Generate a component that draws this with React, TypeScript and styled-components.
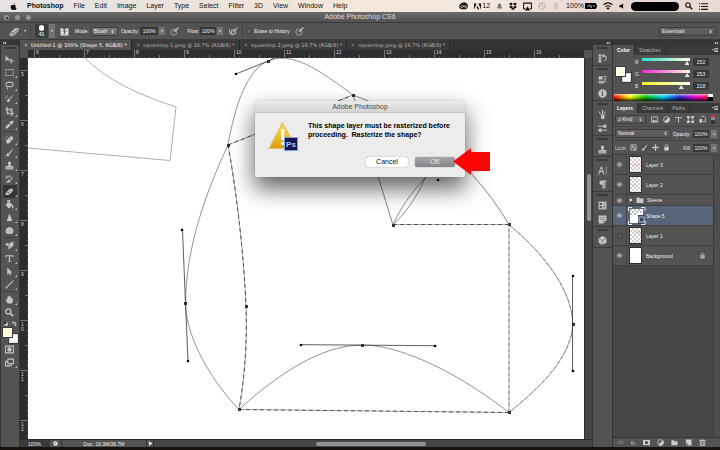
import React from "react";
import styled, { createGlobalStyle, css } from "styled-components";

const Global = createGlobalStyle`
  * { box-sizing: border-box; }
  body { margin: 0; background: #17130f; overflow: hidden; }
  button, input, select { font: inherit; color: inherit; margin: 0; padding: 0; border: 0; background: none; border-radius: 0; outline: none; }
  svg { display: block; flex: none; }
`;

const ui = `"Liberation Sans", Arial, sans-serif`;

const Page = styled.div`
  position: relative;
  display: flex;
  flex-direction: column;
  height: 100vh;
  font: 5px/8px ${ui};
  color: #e4e4e4;
`;

/* ---------- system menu bar ---------- */
const MenuBar = styled.header`
  display: flex;
  align-items: center;
  justify-content: space-between;
  height: 12px;
  padding: 0 12px 0 10px;
  background: linear-gradient(90deg, #e6e3e2, #ece3dd 25%, #f4e8dc 50%, #f5e9e0 65%, #e8d6d0 85%, #e9dad6);
  color: #111;
  font-size: 7px;
  line-height: 12px;
`;
const MenuList = styled.nav`
  display: flex;
  align-items: center;
  gap: 10px;
`;
const MenuItem = styled.button<{ $bold?: boolean }>`
  font-weight: ${(p) => (p.$bold ? 700 : 400)};
`;
const Tray = styled.div`
  display: flex;
  align-items: center;
  gap: 6px;
`;
const TrayGroup = styled.span`
  display: flex;
  align-items: center;
  gap: 1px;
`;
const Redacted = styled.span`
  width: 48px;
  height: 9px;
  border-radius: 5px;
  background: #000;
`;

/* ---------- window chrome ---------- */
const TitleBar = styled.div`
  position: relative;
  display: flex;
  align-items: center;
  justify-content: center;
  height: 11px;
  background: linear-gradient(#6b6b6b, #515151);
  border-bottom: 1px solid #3b3b3b;
  font-size: 7px;
  color: #dcdcdc;
`;
const Lights = styled.div`
  position: absolute;
  left: 4px;
  top: 3px;
  display: flex;
  gap: 6px;
`;
const Light = styled.button`
  display: grid;
  place-items: center;
  width: 5px;
  height: 5px;
  border-radius: 50%;
  background: #97979b;
`;
const Options = styled.div`
  display: flex;
  align-items: center;
  height: 17px;
  padding: 0 4px 0 9px;
  background: #535353;
  border-bottom: 1px solid #3a3a3a;
  gap: 3px;
`;
const Cluster = styled.div<{ $gap?: number; $pad?: number }>`
  display: flex;
  align-items: center;
  gap: ${(p) => p.$gap ?? 2}px;
  padding-left: ${(p) => p.$pad ?? 0}px;
`;
const Spacer = styled.span`
  flex: 1;
`;
const Rule = styled.span`
  width: 1px;
  height: 12px;
  background: #424242;
`;
const BrushPick = styled.button`
  display: flex;
  flex-direction: column;
  align-items: center;
  width: 13px;
  height: 14px;
  padding-top: 1px;
  background: #3b3b3b;
  line-height: 6px;
  font-weight: 700;
`;
const BrushDot = styled.span`
  width: 5px;
  height: 6px;
  border-radius: 3px;
  background: #fff;
`;
const Drop = styled.button<{ $tall?: boolean }>`
  display: grid;
  place-items: center;
  width: 6px;
  height: ${(p) => (p.$tall ? 14 : 8)}px;
  background: #747474;
`;
const PlainLabel = styled.label`
  color: #f0f0f0;
  white-space: nowrap;
`;
const Value = styled.input<{ $w?: number }>`
  width: ${(p) => p.$w ?? 16}px;
  height: 8px;
  background: #383838 !important;
  color: #f4f4f4 !important;
  text-align: center;
`;
const SelectBox = styled.span<{ $w?: number; $dark?: boolean }>`
  display: grid;
  grid-template-columns: 1fr 7px;
  align-items: center;
  ${(p) => (p.$w ? `width: ${p.$w}px;` : "flex: 1;")}
  height: 9px;
  border: 1px solid #3e3e3e;
  border-radius: 1px;
  background: ${(p) => (p.$dark ? "linear-gradient(#626262, #585858)" : "linear-gradient(#7b7b7b, #666)")};
  select {
    grid-area: 1 / 1 / 2 / 3;
    appearance: none;
    width: 100%;
    height: 7px;
    line-height: 7px;
    padding-left: 2px;
    color: #f2f2f2;
  }
  svg {
    grid-area: 1 / 2 / 2 / 3;
    pointer-events: none;
  }
`;
const Check = styled.input`
  appearance: none;
  width: 6px;
  height: 6px;
  border: 1px solid #3c3c3c !important;
  background: #626262 !important;
`;

/* ---------- work area ---------- */
const Work = styled.div`
  display: flex;
  flex: 1;
  min-height: 0;
  margin-bottom: 3px;
  background: #333;
  padding-left: 1px;
  gap: 1px;
`;
const Column = styled.div<{ $w: number }>`
  display: flex;
  flex-direction: column;
  flex: none;
  width: ${(p) => p.$w}px;
  background: #535353;
`;
const Collapse = styled.button<{ $end?: boolean }>`
  display: flex;
  align-items: center;
  justify-content: ${(p) => (p.$end ? "flex-end" : "flex-start")};
  flex: none;
  height: 5px;
  padding: 0 2px;
  background: #363636;
`;
const Grip = styled.span<{ $h: number }>`
  display: block;
  flex: none;
  align-self: center;
  width: 11px;
  height: ${(p) => p.$h}px;
  background: linear-gradient(#3a3a3a, #3a3a3a) center 2px / 11px 2px no-repeat;
`;
const Tool = styled.button<{ $on?: boolean }>`
  display: grid;
  place-items: center;
  flex: none;
  height: 13px;
  margin: 0 2px;
  color: #c6c6c6;
  ${(p) => p.$on && css`background: #343434; border-radius: 1px;`}
`;
const ToolRule = styled.span`
  flex: none;
  height: 1px;
  margin: 0 2px 1px;
  background: #414141;
`;
const Swatches = styled.div`
  position: relative;
  flex: none;
  align-self: center;
  width: 15px;
  height: 15px;
`;
const Swatch = styled.button<{ $back?: boolean }>`
  position: absolute;
  ${(p) => (p.$back ? "right: 0; bottom: 0; background: #fff;" : "left: 0; top: 0; background: #fefbda;")}
  width: 9px;
  height: 9px;
  border: 1px solid ${(p) => (p.$back ? "#ddd" : "#fff")};
  outline: 1px solid #3a3a3a;
`;
const MiniRow = styled.div`
  display: flex;
  justify-content: space-around;
  align-items: center;
  height: 9px;
`;

/* ---------- document ---------- */
const Doc = styled.main`
  display: flex;
  flex-direction: column;
  flex: 1;
  min-width: 0;
`;
const Tabs = styled.div`
  display: flex;
  height: 10px;
  background: #333;
  font: 5px/9px "DejaVu Sans", sans-serif;
`;
const Tab = styled.button<{ $on?: boolean }>`
  display: flex;
  align-items: center;
  gap: 3px;
  padding: 0 4px;
  white-space: nowrap;
  border-right: 1px solid #262626;
  background: ${(p) => (p.$on ? "#535353" : "#3a3a3a")};
  color: ${(p) => (p.$on ? "#fff" : "#b4b4b4")};
`;
const View = styled.div`
  display: grid;
  grid-template-columns: 8px minmax(0, 1fr) 8px;
  grid-template-rows: 8px minmax(0, 1fr) 8px;
  flex: 1;
  min-height: 0;
`;
const Corner = styled.span`
  background: #535353;
`;
const rulerText = css`
  overflow: hidden;
  color: #cfcfcf;
  line-height: 5px;
  display: flex;
`;
const RulerX = styled.div`
  ${rulerText}
  padding-left: 6px;
  background:
    repeating-linear-gradient(90deg, #777 0 1px, transparent 1px 25px) 6px 5px / 100% 3px no-repeat,
    repeating-linear-gradient(90deg, #666 0 1px, transparent 1px 5px) 1px 7px / 100% 1px no-repeat,
    #2e2e2e;
  span { flex: none; width: 50px; height: 8px; padding: 0 1px; border-left: 1px solid #777; }
`;
const RulerY = styled.div`
  ${rulerText}
  flex-direction: column;
  padding-top: 12px;
  background:
    repeating-linear-gradient(#777 0 1px, transparent 1px 25px) 5px 12px / 3px 100% no-repeat,
    repeating-linear-gradient(#666 0 1px, transparent 1px 5px) 7px 2px / 1px 100% no-repeat,
    #2e2e2e;
  span { flex: none; width: 8px; height: 50px; padding: 1px 4px 0 1px; border-top: 1px solid #777; word-break: break-all; }
`;
const Canvas = styled.div`
  background: #fff;
  overflow: hidden;
  svg { width: 100%; height: 100%; }
`;
const ScrollY = styled.div`
  display: flex;
  justify-content: center;
  padding-top: 116px;
  background: #464646;
  border-left: 1px solid #303030;
`;
const Thumb = styled.span<{ $w: number; $h: number }>`
  width: ${(p) => p.$w}px;
  height: ${(p) => p.$h}px;
  border-radius: 2px;
  background: #929292;
`;
const Status = styled.footer`
  grid-column: 1 / 4;
  display: flex;
  align-items: center;
  background: #464646;
  border-top: 1px solid #2b2b2b;
`;
const StatusCell = styled.span<{ $w: number; $dark?: boolean }>`
  display: flex;
  align-items: center;
  justify-content: center;
  width: ${(p) => p.$w}px;
  height: 7px;
  background: ${(p) => (p.$dark ? "#3a3a3a" : "#535353")};
  border-right: 1px solid #333;
  color: #f0f0f0;
`;
const ScrollX = styled.span`
  flex: 1;
  display: flex;
  justify-content: center;
  padding-right: 4px;
`;

/* ---------- docks and panels ---------- */
const DockGroup = styled.div`
  display: flex;
  flex-direction: column;
  border-bottom: 1px solid #3a3a3a;
`;
const DockButton = styled.button`
  display: grid;
  place-items: center;
  height: 14px;
  color: #c4c4c4;
`;
const PanelTabs = styled.div`
  display: flex;
  align-items: stretch;
  flex: none;
  height: 10px;
  padding-right: 2px;
  background: #3a3a3a;
`;
const PanelTab = styled.button<{ $on?: boolean }>`
  padding: 0 4px;
  line-height: 10px;
  border-right: 1px solid #2f2f2f;
  background: ${(p) => (p.$on ? "#535353" : "transparent")};
  color: ${(p) => (p.$on ? "#fff" : "#b5b5b5")};
  font-weight: ${(p) => (p.$on ? 700 : 400)};
`;
const ColorBody = styled.div`
  display: flex;
  gap: 4px;
  padding: 3px;
`;
const Channels = styled.div`
  display: flex;
  flex-direction: column;
  gap: 4px;
  flex: 1;
`;
const Channel = styled.div`
  display: grid;
  grid-template-columns: 4px minmax(0, 1fr) 16px;
  gap: 3px;
  align-items: center;
  height: 8px;
  padding-right: 8px;
`;
const Slider = styled.input<{ $from: string; $to: string }>`
  appearance: none;
  width: 100%;
  height: 8px;
  &::-webkit-slider-runnable-track {
    height: 8px;
    background: linear-gradient(90deg, ${(p) => p.$from}, ${(p) => p.$to}) 0 0 / 100% 3px no-repeat;
  }
  &::-webkit-slider-thumb {
    appearance: none;
    width: 5px;
    height: 4px;
    margin-top: 3px;
    background: #e6e6e6;
    clip-path: polygon(50% 0, 100% 100%, 0 100%);
  }
`;
const Spectrum = styled.div`
  display: flex;
  flex: none;
  height: 7px;
  margin: 1px 7px 2px 1px;
  background:
    linear-gradient(rgba(255, 255, 255, 0.6), rgba(255, 255, 255, 0) 45%, rgba(0, 0, 0, 0.85)),
    linear-gradient(90deg, #f00, #ff0 16%, #0b0 32%, #0cf 50%, #22c 66%, #e0c 83%, #f00);
`;
const WhiteBlack = styled.span`
  width: 5px;
  margin-left: auto;
  background: linear-gradient(#fff 50%, #000 50%);
`;
const PanelRow = styled.div<{ $gap?: number }>`
  display: flex;
  align-items: center;
  flex: none;
  gap: ${(p) => p.$gap ?? 2}px;
  height: 14px;
  padding: 0 3px 0 2px;
  border-bottom: 1px solid #454545;
  color: #d0d0d0;
`;
const FilterSwitch = styled.input`
  appearance: none;
  width: 4px;
  height: 9px;
  background: linear-gradient(#c33 2px, #8a8a8a 2px 5px, #333 5px) !important;
`;
const IconButton = styled.button`
  display: grid;
  place-items: center;
  flex: none;
`;
const LayerArea = styled.div`
  display: flex;
  flex: 1;
  min-height: 0;
  background: #464646;
`;
const LayerList = styled.ul`
  flex: 1;
  margin: 0;
  padding: 0;
  list-style: none;
`;
const LayerItem = styled.li<{ $on?: boolean; $short?: boolean }>`
  display: flex;
  align-items: center;
  height: ${(p) => (p.$short ? 11 : 20)}px;
  border-bottom: 1px solid #404040;
  background: ${(p) => (p.$on ? "#56657a" : "#535353")};
  color: #f0f0f0;
`;
const Eye = styled.button`
  display: grid;
  place-items: center;
  width: 14px;
  height: 100%;
  border-right: 1px solid #454545;
  color: #c8c8c8;
`;
const LayerThumb = styled.span<{ $plain?: boolean }>`
  display: block;
  width: 13px;
  height: 17px;
  margin: 0 4px 0 2px;
  border: 1px solid #2e2e2e;
  background: ${(p) => (p.$plain ? "#fff" : "repeating-conic-gradient(#cfcfcf 0 25%, #fff 0 50%) 0 0 / 4px 4px")};
`;
const LayerName = styled.span`
  flex: 1;
`;
const PanelFooter = styled.div`
  display: flex;
  align-items: center;
  justify-content: center;
  gap: 7px;
  flex: none;
  height: 10px;
  padding-right: 10px;
  border-top: 1px solid #363636;
  color: #cfcfcf;
`;
const LayerScroll = styled.span`
  width: 7px;
  border-left: 1px solid #3a3a3a;
  background: #4d4d4d;
`;

/* ---------- dialog ---------- */
const Dialog = styled.section`
  position: absolute;
  left: 50%;
  top: 101px;
  width: 210px;
  margin-left: -105px;
  border-radius: 3px 3px 1px 1px;
  background: #ececec;
  box-shadow: 0 11px 22px 1px rgba(0, 0, 0, 0.6), 0 0 1px rgba(0, 0, 0, 0.5);
  color: #000;
  font-size: 7px;
`;
const DialogTitle = styled.h1`
  margin: 0;
  height: 12px;
  border-bottom: 1px solid #c4c4c4;
  border-radius: 3px 3px 0 0;
  background: linear-gradient(#ebebeb, #d4d4d4);
  color: #484848;
  font: 400 7px/12px ${ui};
  text-align: center;
`;
const DialogBody = styled.div`
  display: flex;
  gap: 9px;
  padding: 8px 8px 0 13px;
`;
const Message = styled.p`
  margin: 0;
  font-weight: 700;
  line-height: 9px;
  white-space: pre-wrap;
`;
const DialogButtons = styled.div`
  display: flex;
  justify-content: flex-end;
  gap: 7px;
  padding: 6px 10px 10px;
`;
const PushButton = styled.button<{ $primary?: boolean }>`
  width: ${(p) => (p.$primary ? 40 : 42)}px;
  height: 10px;
  border-radius: 2px;
  line-height: 10px;
  background: ${(p) => (p.$primary ? "linear-gradient(#a5a5aa, #84848a)" : "#fff")};
  color: ${(p) => (p.$primary ? "#e8e8ea" : "#111")};
  box-shadow: 0 0 1px rgba(0, 0, 0, 0.6);
`;
const Arrow = styled.svg`
  position: absolute;
  right: -25px;
  bottom: 2px;
`;

/* ---------- icons, all on a 16-unit grid ---------- */
const S = { fill: "none", stroke: "currentColor", strokeWidth: 1.8 } as const;
const icons: Record<string, React.ReactNode> = {
  move: <><path d="M1 1v11l3-3 5 0z" /><path {...S} d="M11 6v9M6.500 10.500h9" /></>,
  marquee: <path {...S} strokeDasharray="2.500 2" d="M1.500 2.500h13v11h-13z" />,
  lasso: <><ellipse {...S} cx="8" cy="6" rx="6.500" ry="4" /><path {...S} d="M4 9c-2 2 1 3 0 6" /></>,
  quick: <><path d="M15 1 8 7l2 2zM7 8c-3 0-2 4-5 5 4 2 8 0 7-3z" /><path {...S} strokeDasharray="2 2" d="M1 8c0-4 4-5 6-4" /></>,
  crop: <><path {...S} strokeWidth={2.2} d="M4 0v12h12M0 4h12v12" /><path {...S} strokeWidth={1} d="M4 12 14 2" /></>,
  dropper: <path d="M10 3c2-3 6-2 5 1l-3 3 1 1-1 1-5-5 1-1zM7 6l3 3-6 6H1v-3z" />,
  heal: <><path d="M3 9 9 3c3-2 7 1 5 4l-6 7c-4 3-8-1-5-5z" /><path stroke="#555" strokeDasharray="1 1" d="m6 6 5 5M8 5l4 4" /><path {...S} strokeWidth={1.2} strokeDasharray="2 1" d="M1 8c0-5 4-7 6-6" /></>,
  brush: <path d="M15.500.5 7 8l2 2zM6 9c-3 0-2 4-5.500 5C5 16 9 14 8 11z" />,
  stamp: <path d="M8 1a3 3 0 0 1 2 5v3h5v3H1V9h5V6a3 3 0 0 1 2-5zM1 13h14v2H1z" />,
  history: <><path d="M15 4 9 9l2 2zM8 10c-3 0-3 3-7 4 5 2 9 1 9-1z" /><path {...S} strokeWidth={1.5} d="M1 4h8M1 7h5M8 2l2 2-2 2" /></>,
  eraser: <><path d="M1 10 9 3h6l-1 4-7 7H1z" /><path stroke="#555" strokeWidth="1" d="M1 10h6l8-7M7 10v4" fill="none" /></>,
  bucket: <><path d="m7 3 7 6-7 6-6-6zM13 9c4 2 2 6 1 6s-2-2-1-6z" /><path {...S} d="M5 7V1h3v3" /></>,
  blur: <path d="M8 1 13 14H3z" />,
  sponge: <><path d="M2 5c3-4 9-4 12 0 2 4 1 8-2 9H4C1 13 0 9 2 5z" /><path stroke="#666" strokeDasharray="1 2" d="M3 7h10M4 10h9" /></>,
  pen: <><path d="M15 1 9 3 6 9l-1 5 5-1 5-5zM1 5h6v2H1zM3 3h2v6H3z" /><path stroke="#555" d="m6 13 4-4" /></>,
  type: <path d="M1 2h14v4h-1l-1-2H9v9l2 1H5l2-1V4H3L2 6H1z" />,
  select: <path d="M4 1v13l3-3 2 4 2-1-2-4h4z" />,
  line: <path {...S} strokeWidth={2} d="M1 15 15 1" />,
  hand: <path d="M5 15 1 9c-1-2 1-2 2-1l1 1V4c0-1 2-1 2 0V2c0-1 2-1 2 0v1c0-2 2-2 2 0v2c0-1 2-1 2 0v2c0-1 2-1 2 0 1 3-1 6-2 8z" />,
  zoom: <><circle {...S} strokeWidth={2.4} cx="6" cy="6" r="4.500" /><path {...S} strokeWidth={3} d="m9.500 9.500 5 5" /></>,
  mask: <><path {...S} d="M1 2h14v12H1z" /><circle cx="8" cy="8" r="4" /></>,
  screen: <><path {...S} d="M5 2h10v8H5z" /><path {...S} d="M11 10v4H1V6h4" /></>,
  down: <path d="M3 5h10l-5 7z" />,
  updown: <path d="M4 7h8L8 2zM4 9h8l-4 5z" />,
  pressure: <><circle {...S} strokeWidth={1.3} cx="7" cy="9" r="5.500" /><path {...S} strokeWidth={2.6} d="m7 9 8-8" /></>,
  air: <><path {...S} d="M2 4c-3 4 0 10 5 9" /><circle {...S} cx="8" cy="9" r="4" /><path {...S} d="m7 9 8-8" /></>,
  brushPanel: <><path d="M1 2h4v2h6V2h4v13H1z" /><path d="M4 6h2v2H4zM10 6h2v2h-2zM7 5h2v6H7zM4 12h8v1H4z" fill="#444" /></>,
  eye: <><path {...S} strokeWidth={1.4} d="M1 8c4-6 10-6 14 0-4 6-10 6-14 0z" /><circle cx="8" cy="8" r="3" /></>,
  folder: <path d="M1 3h5l2 2h7v9H1z" />,
  lock: <><path d="M3 7h10v8H3z" /><path {...S} d="M5 8V5c0-4 6-4 6 0v3" /></>,
  layersHistory: <><path d="M1 1h5v4H1zM1 6h5v4H1zM1 11h5v4H1z" /><path {...S} d="M8 3h3c5 0 5 8 0 9M10 0 8 3l3 3" /></>,
  props: <><path d="M1 2h7v6H1zM10 2h5v2h-5zM10 6h5v2h-5zM1 10h14v2H1zM1 13h10v2H1z" /></>,
  info: <><circle cx="8" cy="8" r="7.500" /><path fill="#505050" d="M7 3h2v2H7zM6 6h3v5h1v1H6v-1h1V7H6z" /></>,
  brushes: <path d="M5 8h7l-1 8H6zM7 0h2v7H7zM2 2l3 5-1 1-3-5zM12 2l2 1-3 4-1-1z" />,
  presets: <path d="M0 3h10V1h3l3 3-3 3h-3V5H0zM16 12H6v2H3l-3-3 3-3h3v2h10z" />,
  character: <path d="M0 15 5 1h2l5 14h-2l-1-4H3l-1 4zm4-6h4L6 4zM14 1h1v14h-1z" />,
  para: <path d="M6 1h9v2h-2v12h-2V3h-1v12H8V9C1 9 1 1 6 1z" />,
  styles: <><path d="M1 1h14v14H1z" /><path fill="#555" d="M3 3h4v4H3zM9 3h4v1H9zM9 6h4v1H9zM3 9h4v4H3zM9 9h4v1H9zM9 12h4v1H9z" /></>,
  note: <><path d="M1 1h14v9l-5 5H1z" /><path fill="#555" d="M3 4h9v1H3zM3 7h9v1H3zM10 10h4l-4 4z" /></>,
  cube: <><path d="m8 0 7 4v8l-7 4-7-4V4z" /><path stroke="#555" fill="none" d="m1 4 7 4 7-4M8 8v8" /></>,
  picture: <><path {...S} d="M1 2h14v12H1z" /><path d="m2 13 4-5 3 3 2-2 3 4z" /></>,
  adjust: <><circle {...S} cx="8" cy="8" r="6.500" /><path d="M3 13 13 3a7 7 0 0 1-10 10z" /></>,
  shape: <><path {...S} d="M3 3h10v10H3z" /><path d="M0 0h5v5H0zM11 0h5v5h-5zM0 11h5v5H0zM11 11h5v5h-5z" /></>,
  smart: <><path {...S} d="M5 1h7l3 3v9H8" /><path d="M1 7h6v8H1z" /></>,
  transparent: <><path {...S} d="M2 2h12v12H2z" /><path d="M4 4h4v4H4zM8 8h4v4H8z" /></>,
  cross: <path d="m8 0 3 4H9v3h3V5l4 3-4 3V9H9v3h2l-3 4-3-4h2V9H4v2L0 8l4-3v2h3V4H5z" />,
  link: <><rect {...S} x="1" y="5" width="7" height="6" rx="3" /><rect {...S} x="8" y="5" width="7" height="6" rx="3" /></>,
  addMask: <><path d="M0 2h16v12H0z" /><circle cx="8" cy="8" r="3.500" fill="#444" /></>,
  page: <><path d="M2 1h13v14H7V9H2z" /><path d="M1 10h5v5z" /></>,
  trash: <><path d="M1 3h14v2H1zM6 1h4v2H6z" /><path {...S} d="M3 5v10h10V5M6 6v8M10 6v8" /></>,
  apple: <path d="M11 0c0 2-1 3-3 4 0-2 1-3 3-4zM8 5c2-1 4-1 6 1-3 2-2 5 1 6-2 4-3 5-5 4-1-1-2-1-3 0-3 1-7-5-5-9 1-3 4-3 6-2z" />,
  cloud: <><path d="M2 4c3-4 11-4 13 0s0 9-4 9H5C0 13-1 7 2 4z" /><path stroke="#eee" strokeWidth="1.300" fill="none" d="M5 11C1 9 5 4 8 7l3 3c3 1 4-4 0-4-2 0-4 5-6 4" /></>,
  adobe: <path d="M0 1h6L0 15zM10 1h6v14zM8 6l4 9H9l-1-3H5z" />,
  bell: <path d="M8 1c4 0 4 4 4 7l2 4H2l2-4c0-3 0-7 4-7zM6 13h4l-2 3z" />,
  dropbox: <path d="m4 1 4 3-4 3-4-3zM12 1l4 3-4 3-4-3zM4 7l4 3-4 3-4-3zM12 7l4 3-4 3-4-3zM8 11l4 3-4 2-4-2z" />,
  airplay: <><path {...S} d="M4 12H1V2h14v10h-3" /><path d="m8 8 5 7H3z" /></>,
  clock: <><circle {...S} cx="8" cy="8" r="6.500" /><path {...S} d="M8 3v5l3 2M0 6l2 3 3-2" /></>,
  bluetooth: <path {...S} strokeWidth={1.4} d="m4 4 8 7-4 4V1l4 4-8 7" />,
  wifi: <><path {...S} d="M1 6c4-4 10-4 14 0M4 9c3-2 5-2 8 0" /><path d="m8 14-3-3c2-1 4-1 6 0z" /></>,
  sound: <path d="M1 5h4l6-4v14l-6-4H1z" />,
  menu: <path d="M0 2h2v2H0zM4 2h12v2H4zM0 7h2v2H0zM4 7h12v2H4zM0 12h2v2H0zM4 12h12v2H4z" />,
  panelMenu: <path d="M0 5h5l-2.500 4zM6 3h10v2H6zM6 7h10v2H6zM6 11h10v2H6z" />,
  close: <path {...S} d="m3 3 10 10M13 3 3 13" />,
  right: <path d="m3 1 11 7-11 7z" />,
  expand: <path d="m1 3 6 5-6 5zM8 3l7 5-7 5z" />,
  collapse: <path d="M7 3 1 8l6 5zM15 3 8 8l7 5z" />,
  swap: <path {...S} strokeWidth={2.4} d="M2 5h9v9M5 1 1 5l4 4M7 11l4 4 4-4" />,
  resetColors: <><path fill="#ddd" d="M5 5h10v10H5z" /><path fill="#111" stroke="#ccc" d="M1 1h9v9H1z" /></>,
  sync: <><circle cx="8" cy="8" r="7" /><path fill="none" stroke="#444" strokeWidth="2" d="M11 5c-5-2-7 5-2 6" /></>,
};

const Icon = ({ n, s = 8, c }: { n: string; s?: number; c?: string }) => (
  <svg width={s} height={s} viewBox="0 0 16 16" fill="currentColor" color={c} aria-hidden>
    {icons[n]}
  </svg>
);

const toolGroups = [
  ["move", "marquee", "lasso", "quick", "crop", "dropper"],
  ["heal", "brush", "stamp", "history", "eraser", "bucket", "blur", "sponge"],
  ["pen", "type", "select", "line"],
  ["hand", "zoom"],
];
const noCorner = ["move", "zoom", "mask"];

const ToolButton = ({ n }: { n: string }) => (
  <Tool $on={n === "eraser"} aria-label={n}>
    <svg width="14" height="12" viewBox="0 0 14 12" fill="currentColor" aria-hidden>
      <svg x="2" y="1" width="9" height="9" viewBox="0 0 16 16">{icons[n]}</svg>
      {!noCorner.includes(n) && <path d="M14 9v2h-2z" />}
    </svg>
  </Tool>
);

const dockGroups = [["layersHistory"], ["props", "info"], ["brushes", "presets"], ["stamp"], ["character", "para"], ["styles", "note"], ["cube"]];
const menus = ["File", "Edit", "Image", "Layer", "Type", "Select", "Filter", "3D", "View", "Window", "Help"];
const docs = ["Untitled-1 @ 100% (Shape 5, RGB/8) *", "squaretop 1.jpeg @ 16.7% (RGB/8) *", "squaretop 2.jpeg @ 16.7% (RGB/8) *", "squaretop.jpeg @ 16.7% (RGB/8) *"];
const channels = [
  { k: "R", v: 252, a: "#2fe0d0", b: "#fffbda" },
  { k: "G", v: 253, a: "#fa20d8", b: "#fffbda" },
  { k: "B", v: 218, a: "#f6f21c", b: "#fdfdff" },
];
const layers = [
  { name: "Layer 3", mark: "M2 8h8" },
  { name: "Layer 2", mark: "M1 8h5" },
  { name: "Sleeve", folder: true },
  { name: "Shape 5", on: true },
  { name: "Layer 1", hidden: true, mark: "M4 4h6v4" },
  { name: "Background", plain: true },
];

const anchors = [[268, 61], [353, 95], [228, 145], [185, 303], [246, 306], [239, 409], [362, 345], [393, 225], [509, 224], [573, 324], [509, 412]];
const handles = [[236, 74], [182, 230], [188, 361], [301, 345], [435, 346], [573, 276], [573, 371], [438, 180]];

const Artwork = () => (
  <svg viewBox="28 58 556 381" preserveAspectRatio="xMinYMin slice" fill="none" stroke="#777" strokeWidth="0.800" role="img" aria-label="Shape paths">
    <path stroke="#999" d="M28 148 170 160.500 176 107C140 95 107 81 84 57" />
    <path d="M268 61C247 70 235 105 228 145C200 205 186 255 185.500 303.500C186 340 215 385 239 409.500" />
    <path d="M268 61C292 51 318 69 353 95" />
    <path d="M239 409.500C290 363 330 345 362.500 345C405 345 465 378 509 412.500" />
    <path d="M393 225C402 204 415 188 437 165M393 225C412 206 419 192 427 174" />
    <path stroke="#666" d="M353 95 393 225M353 95C400 112 465 150 509 224.500" />
    <path stroke="#888" d="M509 224.500C548 258 571 290 573 324C571 355 546 383 509 412.500" />
    <path stroke="#999" d="M228 145 353 95M228 145C238 200 244 260 246 306C247 335 246 370 239 409.500L509 412.500V224.500H393" />
    <path stroke="#555" strokeWidth="1" strokeDasharray="4 3" d="M228 145 353 95M228 145C238 200 244 260 246 306C247 335 246 370 239 409.500L509 412.500M509 224.500H393" />
    <path stroke="#777" strokeDasharray="3 3" d="M509 412V225M509 224.500C548 258 571 290 573 324C571 355 546 383 509 412.500" />
    <path stroke="#333" d="M236 74 268 61 275 58M182.500 230 185.500 303.500 188 361M301 344.700 435 345.700M572.500 276V371" />
    {anchors.map(([x, y]) => <rect key={`${x}-${y}`} x={x - 1} y={y - 1} width="3" height="3" fill="#333" stroke="none" />)}
    {handles.map(([x, y]) => <circle key={`${x}-${y}`} cx={x} cy={y} r="1.300" fill="#000" stroke="none" />)}
  </svg>
);

const WarningIcon = () => (
  <svg width="31" height="30" viewBox="0 0 31 30" aria-hidden>
    <defs>
      <linearGradient id="warn" x1="0" y1="0" x2="0" y2="1">
        <stop offset="0" stopColor="#ffe14a" />
        <stop offset="1" stopColor="#dc9d12" />
      </linearGradient>
    </defs>
    <path d="M14.500 2 29 27.500H1z" fill="url(#warn)" stroke="#e2c063" strokeWidth="1.200" strokeLinejoin="round" />
    <path d="M13 8h3.400L15.800 19h-2.200z" fill="#fff" />
    <circle cx="14.700" cy="22.500" r="1.700" fill="#fff" />
    <rect x="16.500" y="16.500" width="13" height="13" fill="#1c1450" stroke="#6da4dc" />
    <text x="23" y="26" fill="#9bd0ff" fontFamily="Liberation Sans" fontSize="8" fontWeight="700" textAnchor="middle">Ps</text>
  </svg>
);

export default function App() {
  return (
    <Page>
      <Global />
      <MenuBar>
        <MenuList>
          <Icon n="apple" s={7} />
          <MenuItem $bold>Photoshop</MenuItem>
          {menus.map((m) => <MenuItem key={m}>{m}</MenuItem>)}
        </MenuList>
        <Tray>
          <Icon n="cloud" s={9} />
          <TrayGroup><Icon n="adobe" s={7} />12</TrayGroup>
          <Icon n="bell" s={7} c="#777" />
          <Icon n="dropbox" s={8} />
          <Icon n="airplay" s={9} />
          <Icon n="clock" s={8} c="#aaa" />
          <Icon n="bluetooth" s={8} c="#b5aaa6" />
          <TrayGroup>
            100%
            <svg width="12" height="6" viewBox="0 0 12 6" aria-hidden>
              <path d="M0 0h11v1.500h1v3h-1V6H0z" />
              <path d="M3 2v2M5 1.500 4.500 3h2L6 5M9 2v2" stroke="#ddd" strokeWidth="0.800" fill="none" />
            </svg>
          </TrayGroup>
          <Icon n="wifi" s={10} />
          <Icon n="sound" s={6} />
          <Redacted />
          <Icon n="zoom" s={8} />
          <Icon n="menu" s={9} />
        </Tray>
      </MenuBar>

      <TitleBar>
        <Lights>
          <Light aria-label="Close"><svg width="2" height="2"><circle cx="1" cy="1" r="1" fill="#222" /></svg></Light>
          <Light aria-label="Minimize" />
          <Light aria-label="Zoom" />
        </Lights>
        Adobe Photoshop CS6
      </TitleBar>

      <Options>
        <Cluster $gap={3}><Icon n="eraser" s={11} c="#bbb" /><Icon n="down" s={4} /></Cluster>
        <Rule />
        <Cluster $gap={1} $pad={1}>
          <BrushPick aria-label="Brush size 41"><BrushDot />41</BrushPick>
          <Drop $tall aria-label="Brush presets"><Icon n="down" s={4} /></Drop>
        </Cluster>
        <Cluster $pad={2}><IconButton aria-label="Brush panel"><Icon n="brushPanel" s={9} /></IconButton></Cluster>
        <Cluster $pad={3}>
          <PlainLabel htmlFor="mode">Mode:</PlainLabel>
          <SelectBox $w={27}><select id="mode"><option>Brush</option></select><Icon n="updown" s={5} /></SelectBox>
        </Cluster>
        <Cluster $gap={1}>
          <PlainLabel htmlFor="opacity">Opacity:</PlainLabel>
          <Value id="opacity" $w={18} defaultValue="100%" />
          <Drop aria-label="Opacity slider"><Icon n="down" s={4} /></Drop>
        </Cluster>
        <Cluster $pad={2}><IconButton aria-label="Pressure opacity"><Icon n="pressure" s={9} c="#bbb" /></IconButton></Cluster>
        <Cluster $gap={1} $pad={5}>
          <PlainLabel htmlFor="flow">Flow:</PlainLabel>
          <Value id="flow" defaultValue="100%" />
          <Drop aria-label="Flow slider"><Icon n="down" s={4} /></Drop>
        </Cluster>
        <Cluster $gap={4} $pad={3}><IconButton aria-label="Airbrush"><Icon n="air" s={9} c="#bbb" /></IconButton><Rule /></Cluster>
        <Cluster $gap={2}>
          <Check type="checkbox" id="erase" />
          <PlainLabel htmlFor="erase">Erase to History</PlainLabel>
        </Cluster>
        <Cluster $pad={2}><IconButton aria-label="Pressure size"><Icon n="pressure" s={9} c="#bbb" /></IconButton></Cluster>
        <Spacer />
        <SelectBox $w={57} $dark><select aria-label="Workspace"><option>Essentials</option></select><Icon n="updown" s={5} /></SelectBox>
      </Options>

      <Work>
        <Column $w={18}>
          <Collapse aria-label="Expand tools"><Icon n="expand" s={4} /></Collapse>
          <Grip $h={8} />
          {toolGroups.map((g, i) => (
            <React.Fragment key={i}>
              {i > 0 && <ToolRule />}
              {g.map((n) => <ToolButton key={n} n={n} />)}
            </React.Fragment>
          ))}
          <MiniRow><Icon n="resetColors" s={5} /><Icon n="swap" s={5} /></MiniRow>
          <Swatches><Swatch $back aria-label="Background color" /><Swatch aria-label="Foreground color" /></Swatches>
          <ToolButton n="mask" />
          <ToolButton n="screen" />
        </Column>

        <Doc>
          <Tabs>
            {docs.map((d, i) => <Tab key={d} $on={i === 0}><Icon n="close" s={4} />{d}</Tab>)}
          </Tabs>
          <View>
            <Corner />
            <RulerX>{[6, 7, 8, 9, 10, 11, 12, 13, 14, 15, 16].map((v) => <span key={v}>{v}</span>)}</RulerX>
            <Corner />
            <RulerY>{[5, 6, 7, 8, 9, 10, 11, 12].map((v) => <span key={v}>{v}</span>)}</RulerY>
            <Canvas><Artwork /></Canvas>
            <ScrollY><Thumb $w={4} $h={47} /></ScrollY>
            <Status>
              <StatusCell $w={30} $dark>100%</StatusCell>
              <StatusCell $w={12}><Icon n="sync" s={5} /></StatusCell>
              <StatusCell $w={85}>Doc: 19.3M/36.7M</StatusCell>
              <StatusCell $w={7}><Icon n="right" s={5} /></StatusCell>
              <ScrollX><Thumb $w={110} $h={4} /></ScrollX>
            </Status>
          </View>
        </Doc>

        <Column $w={19}>
          <Collapse $end aria-label="Expand panels"><Icon n="collapse" s={4} /></Collapse>
          {dockGroups.map((g) => (
            <DockGroup key={g[0]}>
              <Grip $h={6} />
              {g.map((n) => <DockButton key={n} aria-label={n}><Icon n={n} s={9} /></DockButton>)}
            </DockGroup>
          ))}
        </Column>

        <Column $w={107}>
          <Collapse $end aria-label="Collapse panels"><Icon n="collapse" s={4} /></Collapse>
          <PanelTabs>
            <PanelTab $on>Color</PanelTab>
            <PanelTab>Swatches</PanelTab>
            <Spacer />
            <IconButton aria-label="Color menu"><Icon n="panelMenu" s={6} /></IconButton>
          </PanelTabs>
          <ColorBody>
            <Cluster><Swatches><Swatch $back aria-label="Background" /><Swatch aria-label="Foreground" /></Swatches></Cluster>
            <Channels>
              {channels.map((c) => (
                <Channel key={c.k}>
                  <label htmlFor={`ch${c.k}`}>{c.k}</label>
                  <Slider id={`ch${c.k}`} type="range" min={0} max={255} defaultValue={c.v} $from={c.a} $to={c.b} />
                  <Value aria-label={`${c.k} value`} defaultValue={c.v} />
                </Channel>
              ))}
            </Channels>
          </ColorBody>
          <Spectrum><WhiteBlack /></Spectrum>
          <PanelTabs>
            <PanelTab $on>Layers</PanelTab>
            <PanelTab>Channels</PanelTab>
            <PanelTab>Paths</PanelTab>
            <Spacer />
            <IconButton aria-label="Layers menu"><Icon n="panelMenu" s={6} /></IconButton>
          </PanelTabs>
          <PanelRow $gap={5}>
            <SelectBox $w={31} $dark><select aria-label="Filter kind"><option>ρ Kind</option></select><Icon n="updown" s={5} /></SelectBox>
            {["picture", "adjust", "type", "shape", "smart"].map((n) => <IconButton key={n} aria-label={n}><Icon n={n} s={7} /></IconButton>)}
            <FilterSwitch type="checkbox" aria-label="Layer filtering" />
          </PanelRow>
          <PanelRow>
            <SelectBox $dark><select aria-label="Blend mode"><option>Normal</option></select><Icon n="updown" s={5} /></SelectBox>
            <PlainLabel htmlFor="lop">Opacity:</PlainLabel>
            <Value id="lop" defaultValue="100%" />
            <Drop aria-label="Layer opacity"><Icon n="down" s={4} /></Drop>
          </PanelRow>
          <PanelRow>
            <span>Lock:</span>
            <Cluster $gap={4} $pad={1}>
              {["transparent", "brush", "cross", "lock"].map((n) => <IconButton key={n} aria-label={`Lock ${n}`}><Icon n={n} s={7} /></IconButton>)}
            </Cluster>
            <Spacer />
            <PlainLabel htmlFor="fill">Fill:</PlainLabel>
            <Value id="fill" defaultValue="100%" />
            <Drop aria-label="Layer fill"><Icon n="down" s={4} /></Drop>
          </PanelRow>
          <LayerArea>
            <LayerList>
              {layers.map((l) => (
                <LayerItem key={l.name} $on={l.on} $short={l.folder}>
                  <Eye aria-label={`Toggle ${l.name}`}>
                    {l.hidden ? <svg width="6" height="6"><path d="M.5.5h5v5h-5z" fill="none" stroke="#424242" /></svg> : <Icon n="eye" s={7} />}
                  </Eye>
                  {l.folder ? (
                    <Cluster $gap={3} $pad={2}><Icon n="right" s={4} c="#fff" /><Icon n="folder" s={8} c="#c8c8c8" /><span /></Cluster>
                  ) : l.on ? (
                    <Cluster $gap={0} $pad={1}>
                      <svg width="18" height="18" viewBox="0 0 18 18" aria-hidden>
                        <path d="M2 2h13v14H2z" fill="#fff" />
                        <path d="M2 2h2v2H2zM6 2h2v2H6zM10 2h2v2h-2zM4 4h2v2H4zM8 4h2v2H8zM12 4h2v2h-2zM2 6h2v2H2zM6 6h2v2H6z" fill="#c4c4c4" />
                        <path d="M10 8h6v9h-6z" fill="#38455c" />
                        <path d="M11 10h5v5h-5z" fill="none" stroke="#b8c4d6" />
                        <path d="M.5 4V.5H4M13 .5h4V4M.5 14v3.500H4M13 17.500h4V14" fill="none" stroke="#ececec" />
                      </svg>
                    </Cluster>
                  ) : (
                    <LayerThumb $plain={l.plain}>
                      {l.mark && <svg width="11" height="15"><path d={l.mark} fill="none" stroke="#f0b4a4" /></svg>}
                    </LayerThumb>
                  )}
                  <LayerName>{l.name}</LayerName>
                  {l.plain && <Cluster $gap={7}><Icon n="lock" s={7} c="#aaa" /><span /></Cluster>}
                </LayerItem>
              ))}
            </LayerList>
            <LayerScroll />
          </LayerArea>
          <PanelFooter>
            <IconButton aria-label="Link layers"><Icon n="link" s={7} c="#888" /></IconButton>
            <IconButton aria-label="Layer style"><i>fx.</i></IconButton>
            {["addMask", "adjust", "folder", "page", "trash"].map((n) => <IconButton key={n} aria-label={n}><Icon n={n} s={7} /></IconButton>)}
          </PanelFooter>
        </Column>
      </Work>

      <Dialog role="dialog" aria-labelledby="dlg">
        <DialogTitle id="dlg">Adobe Photoshop</DialogTitle>
        <DialogBody>
          <WarningIcon />
          <Message>{"This shape layer must be rasterized before\nproceeding.  Rasterize the shape?"}</Message>
        </DialogBody>
        <DialogButtons>
          <PushButton>Cancel</PushButton>
          <PushButton $primary>OK</PushButton>
        </DialogButtons>
        <Arrow width="37" height="27" viewBox="0 0 37 27" aria-hidden><path d="M0 13.500 18 0v4h19v19H18v4z" fill="#fb0505" /></Arrow>
      </Dialog>
    </Page>
  );
}
